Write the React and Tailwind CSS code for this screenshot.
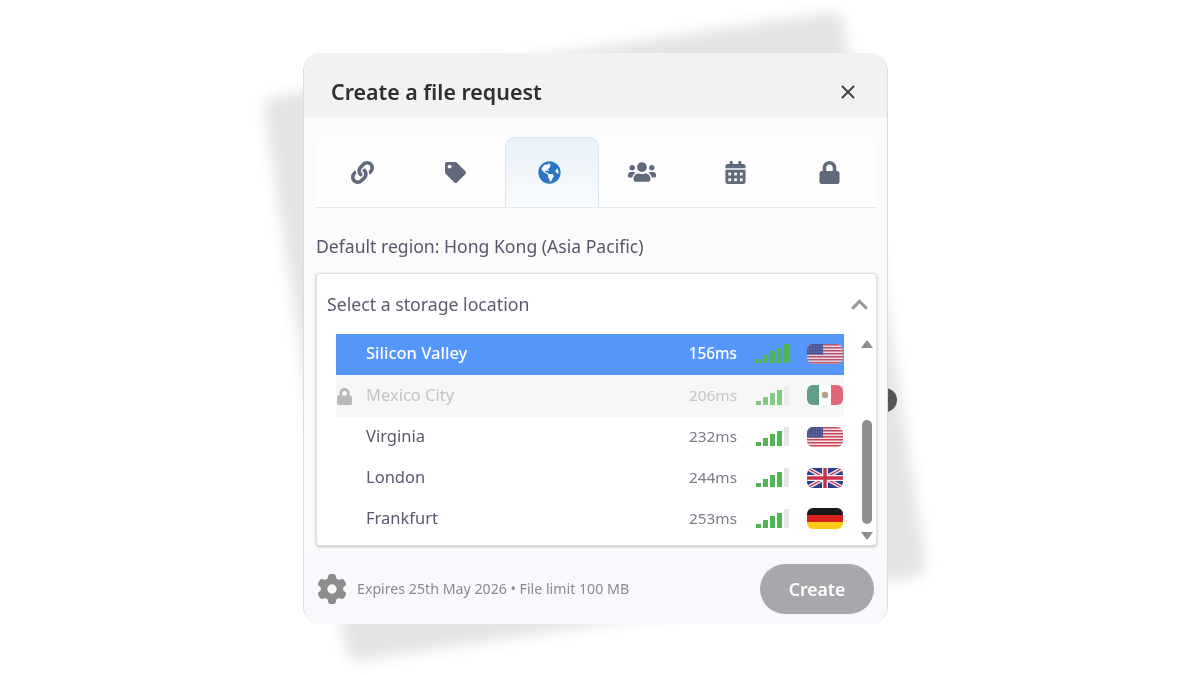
import React from "react";
import { FaLink, FaTag, FaGlobeAmericas, FaUsers, FaCalendarAlt, FaLock, FaChevronUp } from "react-icons/fa";
import { FaGear } from "react-icons/fa6";
import { X } from "lucide-react";

function USFlag() {
  const stripes = [];
  for (let i = 0; i < 7; i++) stripes.push(<rect key={i} x="0" y={i * 3} width="36" height="1.5" fill="#c8485a" />);
  return (
    <svg width="36" height="20" viewBox="0 0 36 20" className="rounded-[6px]">
      <rect width="36" height="20" fill="#f2e0e2" />
      {stripes}
      <rect width="16" height="10.5" fill="#4a4f8c" />
      <path d="M1 2H15M1 5H15M1 8H15" stroke="#9a9cc4" strokeWidth="0.8" strokeDasharray="1 1.6" />
    </svg>
  );
}
function MXFlag() {
  return (
    <svg width="36" height="20" viewBox="0 0 36 20" className="rounded-[6px]">
      <rect width="12" height="20" fill="#1f7a55" />
      <rect x="12" width="12" height="20" fill="#ffffff" />
      <rect x="24" width="12" height="20" fill="#d92a42" />
      <circle cx="18" cy="10" r="3.2" fill="#9a7a55" />
      <circle cx="18" cy="11.5" r="1.6" fill="#5f8f6a" />
    </svg>
  );
}
function UKFlag() {
  return (
    <svg width="36" height="20" viewBox="0 0 36 20" className="rounded-[6px]">
      <rect width="36" height="20" fill="#2b3f8f" />
      <path d="M0 0L36 20M36 0L0 20" stroke="#f3f3f8" strokeWidth="4" />
      <path d="M0 0L36 20M36 0L0 20" stroke="#c9304a" strokeWidth="1.4" />
      <path d="M18 0V20M0 10H36" stroke="#f3f3f8" strokeWidth="6" />
      <path d="M18 0V20M0 10H36" stroke="#c9304a" strokeWidth="3.4" />
    </svg>
  );
}
function DEFlag() {
  return (
    <svg width="36" height="21" viewBox="0 0 36 21" className="rounded-[6px]">
      <rect width="36" height="7" fill="#1a1a1a" />
      <rect y="7" width="36" height="7" fill="#d8201c" />
      <rect y="14" width="36" height="7" fill="#fbcb16" />
    </svg>
  );
}

function Signal({ strong }) {
  const heights = ["h-[4px]", "h-[8px]", "h-[12px]", "h-[15px]", "h-[19px]"];
  return (
    <div className="flex items-end gap-[2px] w-[33px] h-[19px]">
      {heights.map((h, i) => (
        <div
          key={h}
          className={`w-[5px] ${h} ${i === 4 && !strong ? "bg-[#e6e6e6]" : "bg-[#4fb653]"}`}
        />
      ))}
    </div>
  );
}

function Row({ name, ms, flag, strong, active, locked }) {
  const rowBg = active ? "bg-[#5596fb] h-[41px]" : locked ? "bg-[#f7f7f7] h-[42px]" : "bg-white h-[41px]";
  const nameColor = active ? "text-white font-medium" : locked ? "text-[#c4c4c4]" : "text-[#5a5a6e]";
  const msColor = active ? "text-white font-medium" : locked ? "text-[#c4c4c4]" : "text-[#7a7a8a]";
  return (
    <div className={`flex items-center ${rowBg}`}>
      <div className="w-[30px] flex">
        {locked && <FaLock className="text-[#b8b8b8] text-[17px]" />}
      </div>
      <span className={`flex-1 text-[16.5px] pb-[2px] ${nameColor}`}>{name}</span>
      <span className={`w-[60px] text-right text-[15.3px] pb-[2px] ${msColor}`}>{ms}</span>
      <div className={`ml-[19px] pb-[2px] ${locked ? "opacity-70" : ""}`}>
        <Signal strong={strong} />
      </div>
      <div className={`ml-[18px] mr-[1px] w-[36px] flex pb-[2px] ${locked ? "opacity-70" : active ? "opacity-90" : ""}`}>{flag}</div>
    </div>
  );
}

export default function App() {
  const tabs = [
    { icon: <FaLink />, cls: "w-[92px] text-[23px]" },
    { icon: <FaTag />, cls: "w-[97px] pr-[3px] text-[21px]" },
    { icon: <FaGlobeAmericas />, cls: "w-[94px] pr-[6px] text-[23px]", active: true },
    { icon: <FaUsers />, cls: "w-[86px] text-[28px]" },
    { icon: <FaCalendarAlt />, cls: "w-[101px] text-[23px]" },
    { icon: <FaLock />, cls: "w-[91px] pr-[5px] text-[23px]" },
  ];
  return (
    <div className="relative w-[1200px] h-[675px] bg-white overflow-hidden pl-[303px] pt-[53px]" style={{ fontFamily: "'Noto Sans', sans-serif" }}>
      <div className="absolute left-[302px] top-[51px] w-[586px] h-[571px] -rotate-[8.6deg] bg-[#e4e4e4] blur-[7px] rounded-[14px]" />
      <div className="absolute left-[873px] top-[388px] w-[24px] h-[24px] rounded-full bg-[#555]" />
      <div className="relative w-[585px] h-[571px] rounded-[18px] overflow-hidden bg-[#fbfbfb] flex flex-col border-x border-[#dcdcdc] blur-[0.5px]">
        <div className="h-[64px] shrink-0 bg-[#f2f2f2] flex items-center justify-between pl-[27px] pr-[28px]">
          <span className="text-[21.4px] font-semibold text-[#2e2e33] leading-none pt-[13px]">Create a file request</span>
          <X className="text-[#444] w-[22px] h-[22px] mt-[13px]" strokeWidth={2.2} />
        </div>
        <div className="flex-1 flex flex-col pl-[12px] pr-[10px] pt-[20px]">
          <div className="h-[71px] shrink-0 flex bg-[#fdfdfd] border-b border-[#e6e8ec]">
            {tabs.map((t, i) => (
              <div
                key={i}
                className={`flex items-center justify-center ${t.cls} ${
                  t.active
                    ? "text-[#2c74c4] border border-b-0 border-[#d6e7f5] rounded-t-[10px] bg-gradient-to-b from-[#e8f0f9] to-[#fafcfe]"
                    : "text-[#616a7c]"
                }`}
              >
                {t.icon}
              </div>
            ))}
          </div>
          <div className="h-[65px] shrink-0 flex items-center pt-[12px] text-[17.6px] text-[#55586a]">
            Default region: Hong Kong (Asia Pacific)
          </div>
          <div className="h-[273px] shrink-0 bg-white border border-[#e0e0e0] rounded-[4px] shadow-[0_1px_3px_rgba(0,0,0,0.25)] flex flex-col">
            <div className="h-[60px] shrink-0 flex items-center justify-between pl-[10px] pr-[7px]">
              <span className="text-[17.7px] text-[#5a5a6e]">Select a storage location</span>
              <FaChevronUp className="text-[#999] text-[19px]" />
            </div>
            <div className="flex flex-1 pl-[19px]">
              <div className="w-[508px] flex flex-col">
                <Row name="Silicon Valley" ms="156ms" flag={<USFlag />} strong active />
                <Row name="Mexico City" ms="206ms" flag={<MXFlag />} locked />
                <Row name="Virginia" ms="232ms" flag={<USFlag />} />
                <Row name="London" ms="244ms" flag={<UKFlag />} />
                <Row name="Frankfurt" ms="253ms" flag={<DEFlag />} />
              </div>
              <div className="w-[16px] ml-[15px] flex flex-col items-center pt-[6px] pb-[5px]">
                <div className="w-0 h-0 border-x-[6px] border-x-transparent border-b-[8px] border-b-[#8f8f8f]" />
                <div className="flex-1 w-full flex flex-col justify-end items-center pb-[8px]">
                  <div className="w-[10px] h-[104px] rounded-full bg-[#8f8f8f]" />
                </div>
                <div className="w-0 h-0 border-x-[6px] border-x-transparent border-t-[8px] border-t-[#8f8f8f]" />
              </div>
            </div>
          </div>
        </div>
        <div className="h-[70px] shrink-0 bg-[#f9f9fd] flex items-center pl-[13px] pr-[13px]">
          <FaGear className="text-[#8c8c8c] text-[30px]" />
          <span className="ml-[10px] flex-1 text-[14.2px] text-[#8a8a8e]">Expires 25th May 2026 • File limit 100 MB</span>
          <div className="w-[114px] h-[50px] rounded-full bg-[#a9a7ab] flex items-center justify-center text-white text-[17.6px] font-semibold">
            Create
          </div>
        </div>
      </div>
    </div>
  );
}
